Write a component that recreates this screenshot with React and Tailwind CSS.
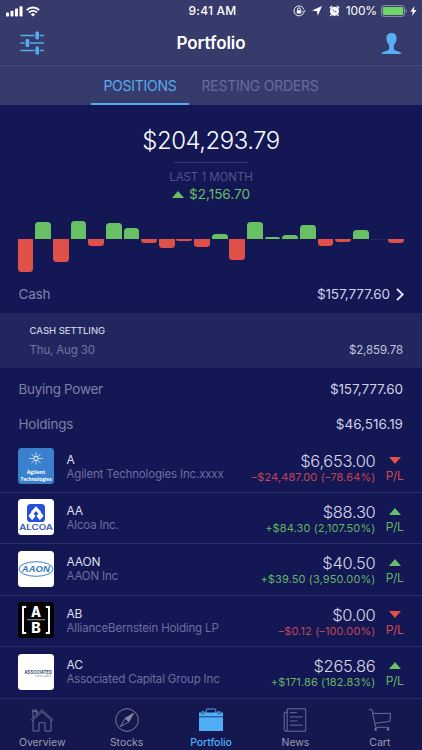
import React from 'react';

const bars = [-33, 17.5, -23, 18.5, -7, 16, 11, -3.5, -8.5, -1.5, -8, 5.5, -20.5, 17.5, 1.8, 4.2, 14.3, -7, -3.2, 9, 0, -4.2];

const AgilentLogo = () => (
  <svg className="overflow-visible" width="36" height="36" viewBox="0 0 36 36">
    <rect width="36" height="36" rx="3.5" fill="#3a80cd" />
    <g stroke="#fff" strokeWidth="0.65">
      <path d="M18 4.5v3.8M18 12.7v3.8M11 10.5h4.8M20.2 10.5H25M13.3 5.8l3.2 3.2M19.5 12l3.2 3.2M22.7 5.8l-3.2 3.2M16.5 12l-3.2 3.2" />
      <circle cx="18" cy="10.5" r="2.1" fill="none" strokeWidth="0.9" />
    </g>
    <g fill="#fff" fontFamily="Open Sans, sans-serif" fontWeight="700" textAnchor="middle">
      <text x="18" y="26" fontSize="6" textLength="18.5" lengthAdjust="spacingAndGlyphs">Agilent</text>
      <text x="18" y="32.6" fontSize="6" textLength="31" lengthAdjust="spacingAndGlyphs">Technologies</text>
    </g>
  </svg>
);

const AlcoaLogo = () => (
  <svg width="36" height="36" viewBox="0 0 36 36">
    <rect width="36" height="36" rx="3.5" fill="#fff" />
    <rect x="9" y="5" width="18" height="18" rx="3.6" fill="#2450dc" />
    <path d="M18 7.2l5 5.6-2.4 2.2-2.6-3-2.6 3-2.4-2.2z" fill="#fff" />
    <path d="M13.8 12.6l3.7 4.3-3.3 4.3-3.8-4.3zM22.2 12.6l3.4 4.3-3.8 4.3-3.3-4.3z" fill="#fff" />
    <text x="18" y="31.1" fontSize="7.2" fontFamily="Inter, sans-serif" fontWeight="600" fill="#3457bd" textAnchor="middle" textLength="33.5" lengthAdjust="spacingAndGlyphs">ALCOA</text>
  </svg>
);

const AaonLogo = () => (
  <svg width="36" height="36" viewBox="0 0 36 36">
    <rect width="36" height="36" rx="3.5" fill="#fff" />
    <ellipse cx="18" cy="18" rx="17" ry="7.3" fill="#fff" stroke="#4283c0" strokeWidth="1" />
    <text x="17.8" y="21.4" fontSize="9.4" fontFamily="Liberation Sans, sans-serif" fontWeight="700" fontStyle="italic" fill="#3478bb" textAnchor="middle" textLength="28" lengthAdjust="spacingAndGlyphs">AAON</text>
  </svg>
);

const AbLogo = () => (
  <svg width="36" height="36" viewBox="0 0 36 36">
    <rect width="36" height="36" rx="3.5" fill="#000" />
    <path d="M8.2 5H5v26h3.2M27.8 5H31v26h-3.2" fill="none" stroke="#fff" strokeWidth="1.9" />
    <path d="M9.2 17.8h18" stroke="#bbb" strokeWidth="0.9" />
    <g fill="#fff" fontFamily="Inter, sans-serif" fontWeight="800" fontSize="14" textAnchor="middle">
      <text x="18" y="14.9" textLength="10" lengthAdjust="spacingAndGlyphs">A</text>
      <text x="18.1" y="31" textLength="9.5" lengthAdjust="spacingAndGlyphs">B</text>
    </g>
  </svg>
);

const AssociatedLogo = () => (
  <svg className="overflow-visible" width="36" height="36" viewBox="0 0 36 36">
    <rect width="36" height="36" rx="3.5" fill="#fff" />
    <text x="6.5" y="20" fontSize="5.2" fontFamily="Inter, sans-serif" fontWeight="700" fill="#3c5278" textLength="27.5" lengthAdjust="spacingAndGlyphs">ASSOCIATED</text>
    <text x="17" y="22.7" fontSize="2.4" fontFamily="Inter, sans-serif" fill="#687790" textLength="16.5" lengthAdjust="spacingAndGlyphs">CAPITAL GROUP</text>
  </svg>
);

const holdings = [
  { symbol: 'A', name: 'Agilent Technologies Inc.xxxx', value: '$6,653.00', change: '–$24,487.00 (–78.64%)', up: false, Logo: AgilentLogo },
  { symbol: 'AA', name: 'Alcoa Inc.', value: '$88.30', change: '+$84.30 (2,107.50%)', up: true, Logo: AlcoaLogo },
  { symbol: 'AAON', name: 'AAON Inc', value: '$40.50', change: '+$39.50 (3,950.00%)', up: true, Logo: AaonLogo },
  { symbol: 'AB', name: 'AllianceBernstein Holding LP', value: '$0.00', change: '–$0.12 (–100.00%)', up: false, Logo: AbLogo },
  { symbol: 'AC', name: 'Associated Capital Group Inc', value: '$265.86', change: '+$171.86 (182.83%)', up: true, Logo: AssociatedLogo },
];

const Triangle = ({ up }) => (
  <svg width="12" height="7" viewBox="0 0 12 7">
    {up ? <path d="M6 0l6 7H0z" fill="#69bf64" /> : <path d="M0 0h12L6 7z" fill="#e05048" />}
  </svg>
);

const StatusBar = () => (
  <div className="flex h-[22px] items-center justify-between pr-[5px] pl-[6px]">
    <div className="flex w-[151px] items-center gap-[3px]">
      <svg width="17" height="11" viewBox="0 0 17 11" fill="#fff">
        <rect x="0" y="6.6" width="3" height="4" rx="0.8" />
        <rect x="4.5" y="4.8" width="3" height="5.8" rx="0.8" />
        <rect x="9" y="2.6" width="3" height="8" rx="0.8" />
        <rect x="13.5" y="0.2" width="3" height="10.4" rx="0.8" />
      </svg>
      <svg width="14" height="11" viewBox="0 0 14 11" fill="none" stroke="#fff" strokeWidth="1.9">
        <path d="M0.8 4.1a8.8 8.8 0 0 1 12.4 0" />
        <path d="M3 6.5a5.7 5.7 0 0 1 8 0" />
        <path d="M7 10.6L4.8 8.4a3.1 3.1 0 0 1 4.4 0z" fill="#fff" stroke="none" />
      </svg>
    </div>
    <span className="text-[12px] leading-none font-medium tracking-[0.2px] text-white">9:41 AM</span>
    <div className="flex w-[149px] items-center justify-end">
      <svg className="mr-[6px]" width="13" height="12" viewBox="0 0 13 12" fill="none" stroke="#fff" strokeWidth="0.9">
        <path d="M10.7 7.6A5 5 0 1 1 10.8 4.5M12.2 5.3l-1.3 2-1.9-1.4" />
        <rect x="3.8" y="5.2" width="4.4" height="3.3" fill="#fff" stroke="none" />
        <path d="M4.6 5.3V4.2a1.4 1.4 0 0 1 2.8 0v1.1" />
      </svg>
      <svg className="mr-[7px]" width="10" height="10" viewBox="0 0 10 10" fill="#fff">
        <path d="M10 0L5.8 9.8 5 5.2 0 4.4z" />
      </svg>
      <svg className="mr-[6px]" width="11" height="12" viewBox="0 0 11 12">
        <circle cx="5.5" cy="6.3" r="4.5" fill="#fff" />
        <path d="M0.8 3.2L3 1.1M10.2 3.2L8 1.1M2.3 9.9L1.3 11M8.7 9.9l1 1.1" stroke="#fff" strokeWidth="1.4" />
        <path d="M3.4 4.6l2.1 2h2" stroke="#373b6b" strokeWidth="0.8" fill="none" />
      </svg>
      <span className="mr-[4px] text-[12px] leading-none tracking-[-0.15px] text-white">100%</span>
      <svg width="27" height="12" viewBox="0 0 27 12">
        <rect x="0.5" y="0.6" width="23" height="10.8" rx="2.6" fill="none" stroke="#a9abc2" strokeWidth="0.8" />
        <rect x="1.8" y="1.9" width="20.4" height="8.2" rx="1.4" fill="#6fd569" />
        <path d="M24.8 4v4c1.2-.5 1.2-3.5 0-4z" fill="#a9abc2" />
      </svg>
      <svg className="ml-[2px]" width="7" height="10" viewBox="0 0 7 10" fill="#fff">
        <path d="M4.4 0L0.4 5.7h2.5L2 10l4.5-6H3.9z" />
      </svg>
    </div>
  </div>
);

const Header = () => (
  <div className="flex h-[44px] items-center justify-between border-b border-[#454979] px-[20px]">
    <svg className="-mt-px" width="25" height="24" viewBox="0 0 25 24" stroke="#56abef" strokeWidth="1.3">
      <path d="M0.5 4.5h14M19.8 4.5h4M0.5 12h4M9.8 12h14M0.5 19.5h14M19.8 19.5h4" />
      <g fill="#56abef" stroke="none">
        <rect x="15.4" y="0.4" width="3.6" height="8" rx="1.3" />
        <rect x="5.6" y="8" width="3.6" height="8" rx="1.3" />
        <rect x="15.4" y="15.5" width="3.6" height="8" rx="1.3" />
      </g>
    </svg>
    <h1 className="text-[17px] leading-none font-semibold tracking-[-0.05px] text-white">Portfolio</h1>
    <div className="flex w-[25px] justify-end">
      <svg className="-mt-px" width="21" height="21" viewBox="0 0 21 21" fill="#56aef5">
        <path d="M10.5 0C7.2 0 5.4 2 5.4 5c0 3.3 1.1 5.3 2.7 7.1v3.4c0 1.2-.7 1.7-2 2.2-2.2.8-5.2 1-5.6 3.3h20c-.4-2.3-3.4-2.5-5.6-3.3-1.3-.5-2-1-2-2.2v-3.4c1.6-1.8 2.7-3.8 2.7-7.1 0-3-1.8-5-5.1-5z" />
      </svg>
    </div>
  </div>
);

const BarChart = () => (
  <div className="flex h-[54px] justify-between pr-[18px] pl-[17.7px]">
    {bars.map((value, i) => (
      <div key={i} className="flex w-[15.8px] flex-col">
        <div className="flex h-[20px] items-end">
          {value > 0 && <div className="w-full rounded-t-[3.5px] bg-[#69bf64]" style={{ height: value }} />}
        </div>
        {value < 0 && <div className="w-full rounded-b-[3.5px] bg-[#df5049]" style={{ height: -value }} />}
        {value === 0 && <div className="h-px w-full bg-[#25255a]" />}
      </div>
    ))}
  </div>
);

const HoldingRow = ({ item }) => {
  const { Logo, up } = item;
  return (
    <div className="flex h-[51.4px] border-b border-[#292d69] pt-[6.5px] pr-[18.5px] pl-[18px]">
      <Logo />
      <div className="ml-[12.5px] flex flex-1 flex-col whitespace-nowrap">
        <span className="mt-[4.5px] text-[12px] leading-[14px] tracking-[-0.2px] text-[#dcdeee]">{item.symbol}</span>
        <span className="text-[11.5px] leading-[14.5px] tracking-[-0.16px] text-[#6b6f9f]">{item.name}</span>
      </div>
      <div className="flex flex-col items-end whitespace-nowrap">
        <span className="mt-[2.5px] text-[16.5px] leading-[20px] font-light tracking-[-0.3px] text-[#d5d7e9]">{item.value}</span>
        <span className={`text-[11px] leading-[13px] tracking-[0.12px] ${up ? 'text-[#64b565]' : 'text-[#c14655]'}`}>{item.change}</span>
      </div>
      <div className={`ml-[10px] flex w-[18px] flex-col items-center text-[12px] ${up ? 'text-[#64b565]' : 'text-[#d14b50]'}`}>
        <div className="mt-[8.5px] mb-[6px] h-[7px]">
          <Triangle up={up} />
        </div>
        <span className="leading-[11px] tracking-[-0.4px]">P/L</span>
      </div>
    </div>
  );
};

const OverviewIcon = () => (
  <svg width="24" height="24" viewBox="0 0 24 24" fill="none" stroke="#73779a" strokeWidth="0.9">
    <path d="M1.3 11.7L12 1.8l10.7 9.9-1 1.1L12 3.9l-9.7 8.9zM3 12v11h6v-8.3h6V23h6V12M3 9.8V3.5h3.3v3" />
    <path d="M2.3 3.5V2h4.6v4" />
  </svg>
);

const StocksIcon = () => (
  <svg width="24" height="24" viewBox="0 0 24 24" fill="none" stroke="#85889d" strokeWidth="0.9">
    <circle cx="12" cy="12" r="11.3" />
    <path d="M18.7 5.3L13.8 13.8 5.3 18.7l4.9-8.5z" />
    <path d="M18.7 5.3L10.2 10.2l3.6 3.6z" fill="#85889d" stroke="none" />
    <path d="M10.2 10.2l3.6 3.6" />
  </svg>
);

const PortfolioIcon = () => (
  <svg width="26" height="24" viewBox="0 0 26 24" fill="#4faef6">
    <path d="M1 9.2h24V23H1zM1 4.6h24v3.9H1z" />
    <path d="M8.2 5V1.9c0-.6.4-.9.9-.9h7.8c.5 0 .9.3.9.9V5" fill="none" stroke="#4faef6" strokeWidth="1" />
    <path d="M3.6 4.8V3.3h2.8v1.5M19.6 4.8V3.3h2.8v1.5" />
    <path d="M3.3 6.2l1.5-1.2 1.5 1.2M19.7 6.2l1.5-1.2 1.5 1.2" fill="none" stroke="#14184f" strokeWidth="0.7" />
  </svg>
);

const NewsIcon = () => (
  <svg width="24" height="24" viewBox="0 0 24 24" fill="none" stroke="#73779a" strokeWidth="0.9">
    <path d="M4.2 0.8h18.5v22.4H3.2a2 2 0 0 1-2-2V4.3h3M4.2 0.8v20.4a1 1 0 0 1-2 1" />
    <path d="M6.8 4.7h7M6.8 8.9h13M6.8 13h7.5M6.8 17.2h13" />
  </svg>
);

const CartIcon = () => (
  <svg width="24" height="24" viewBox="0 0 24 24" fill="none" stroke="#73779a" strokeWidth="0.9">
    <path d="M1 1.7h3l3.5 17.6h13.8M4.7 5.4h17.8l-.5 8L6.7 15.4" />
    <circle cx="7.6" cy="21.4" r="1.3" fill="#73779a" stroke="none" />
    <circle cx="19.9" cy="21.4" r="1.3" fill="#73779a" stroke="none" />
  </svg>
);

const navItems = [
  { label: 'Overview', Icon: OverviewIcon },
  { label: 'Stocks', Icon: StocksIcon },
  { label: 'Portfolio', Icon: PortfolioIcon, active: true },
  { label: 'News', Icon: NewsIcon },
  { label: 'Cart', Icon: CartIcon },
];

export default function App() {
  return (
    <div className="flex h-[750px] w-[422px] flex-col overflow-hidden bg-[#131753] font-['Inter',sans-serif]">
      <div className="h-[105px] shrink-0 bg-[#373b6b]">
        <StatusBar />
        <Header />
        <div className="flex h-[39px] justify-center">
          <div className="flex w-[98px] items-center justify-center border-b-2 border-[#56abef] pt-[2px] text-[14px] tracking-[-0.25px] text-[#56abef]">POSITIONS</div>
          <div className="flex w-[142px] items-center justify-center text-[14px] tracking-[-0.25px] text-[#686b9a]">RESTING ORDERS</div>
        </div>
      </div>

      <div className="flex h-[114px] shrink-0 flex-col items-center">
        <span className="mt-[23px] text-[24px] leading-[26px] font-light tracking-[-0.5px] text-[#fafbff]">$204,293.79</span>
        <div className="mt-[8px] h-px w-[74px] bg-[#373a72]" />
        <span className="mt-[7px] text-[11.5px] leading-[14px] tracking-[-0.05px] text-[#50548a]">LAST 1 MONTH</span>
        <div className="mt-px flex items-center gap-[5px] text-[13.5px] leading-[18px] text-[#69bf64]">
          <Triangle up />
          <span>$2,156.70</span>
        </div>
      </div>

      <BarChart />

      <div className="flex h-[40px] shrink-0 items-center justify-between pt-[2px] pr-[18px] pl-[18.5px]">
        <span className="text-[13.5px] tracking-[-0.2px] text-[#8285ab]">Cash</span>
        <div className="flex items-center gap-[6px]">
          <span className="text-[13.5px] tracking-[-0.1px] text-[#cfd1e5]">$157,777.60</span>
          <svg width="8" height="13" viewBox="0 0 8 13" fill="none" stroke="#e5e6f2" strokeWidth="1.9">
            <path d="M1 0.8l5.7 5.7L1 12.2" />
          </svg>
        </div>
      </div>

      <div className="h-[55px] shrink-0 bg-[#22265f] pt-[10px] pr-[19px] pl-[29.5px]">
        <div className="text-[9.5px] leading-[15px] font-medium text-[#cbcde2]">CASH SETTLING</div>
        <div className="mt-[4px] flex justify-between text-[11.5px] leading-[16px]">
          <span className="tracking-[-0.15px] text-[#71749f]">Thu, Aug 30</span>
          <span className="tracking-[-0.1px] text-[#c1c3dc]">$2,859.78</span>
        </div>
      </div>

      <div className="flex h-[73.6px] shrink-0 flex-col justify-start gap-[15px] pt-[11px] pr-[19px] pl-[18.5px] text-[13.5px] leading-[20px]">
        <div className="flex justify-between">
          <span className="tracking-[-0.3px] text-[#7c7fa8]">Buying Power</span>
          <span className="tracking-[-0.1px] text-[#cfd1e5]">$157,777.60</span>
        </div>
        <div className="flex justify-between">
          <span className="tracking-[-0.2px] text-[#7c7fa8]">Holdings</span>
          <span className="text-[#cfd1e5]">$46,516.19</span>
        </div>
      </div>

      <div className="flex shrink-0 flex-col">
        {holdings.map((item) => (
          <HoldingRow key={item.symbol} item={item} />
        ))}
      </div>

      <div className="flex min-h-0 flex-1 bg-[#14184f]">
        {navItems.map(({ label, Icon, active }) => (
          <div key={label} className={`flex flex-1 flex-col items-center pt-[9px] text-[10.5px] ${active ? 'font-medium text-[#4faef6]' : 'text-[#999bad]'}`}>
            <Icon />
            <span className="mt-[4px] leading-[13px] tracking-[-0.05px]">{label}</span>
          </div>
        ))}
      </div>
    </div>
  );
}
